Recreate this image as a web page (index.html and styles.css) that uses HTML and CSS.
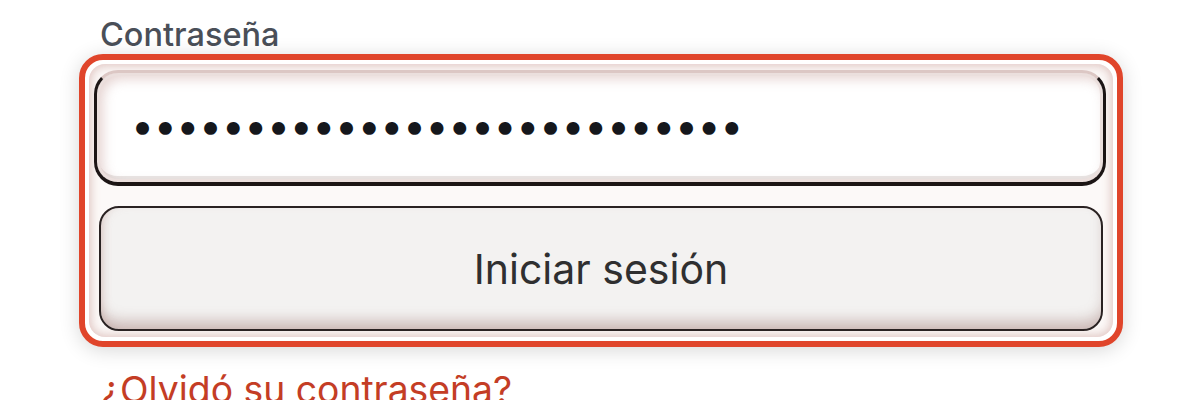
FILE: index.html
```html
<!DOCTYPE html>
<html lang="es">
<head>
<meta charset="utf-8">
<title>Iniciar sesión</title>
<link rel="stylesheet" href="styles.css">
</head>
<body>
<main class="page">
  <label class="field-label" for="password">Contraseña</label>
  <div class="focus-ring">
    <div class="group">
      <input class="pw" id="password" type="password" value="abcdefghijklmnopqrstuvwxyza" readonly>
      <button class="submit" type="button">Iniciar sesión</button>
    </div>
  </div>
  <a class="forgot" href="#">¿Olvidó su contraseña?</a>
</main>
</body>
</html>
```

FILE: styles.css
```css
* { box-sizing: border-box; }
html, body { margin: 0; background: #ffffff; }
body {
  font-family: Inter, "Noto Sans", "Liberation Sans", sans-serif;
  overflow: hidden;
  height: 400px;
}
.page {
  padding: 16px 0 0 79px;
  display: flex;
  flex-direction: column;
  align-items: flex-start;
}
.field-label {
  margin-left: 21px;
  font-size: 32.5px;
  line-height: 38px;
  font-weight: 500;
  color: #4a4f58;
}
.focus-ring {
  width: 1044px;
  border: 6px solid #e0452b;
  border-radius: 24px;
  padding: 4px;
  background: #ffffff;
  box-shadow: 0 3px 20px rgba(0, 0, 0, 0.16);
}
.group {
  display: flex;
  flex-direction: column;
  gap: 20px;
  padding: 6px 7px 6px 5px;
  border-radius: 16px;
  background: #fcf9f8;
  box-shadow: inset 0 0 10px 2px rgba(190, 135, 128, 0.45);
}
.pw {
  display: block;
  width: 100%;
  height: 116px;
  margin: 0;
  padding: 0 0 6px 34px;
  border: 3px solid #1c1515;
  border-bottom-width: 4px;
  border-top-color: #dcc7c4;
  border-radius: 24px;
  background: #ffffff;
  box-shadow: inset 0 0 0 3px #ebdfdd, inset 4px 4px 12px 2px rgba(200, 160, 155, 0.45), inset 0 -6px 0 #e9e5e4;
  font-family: Inter, "Noto Sans", "Liberation Sans", sans-serif;
  font-size: 41px;
  letter-spacing: -0.4px;
  color: #15171c;
  outline: none;
}
.submit {
  display: block;
  height: 125px;
  margin: 0 3px 0 5px;
  border: 2px solid #2a2222;
  border-radius: 20px;
  background: #f3f2f1;
  box-shadow: inset 0 -12px 14px -4px rgba(150, 105, 100, 0.4), inset 6px 0 10px -5px rgba(200, 160, 155, 0.35);
  font-family: Inter, "Noto Sans", "Liberation Sans", sans-serif;
  font-size: 41px;
  font-weight: 400;
  color: #2f2f30;
  cursor: pointer;
}
.forgot {
  margin: 21px 0 0 22px;
  font-size: 37.3px;
  line-height: 44px;
  color: #c43d25;
  text-decoration: none;
}
```
